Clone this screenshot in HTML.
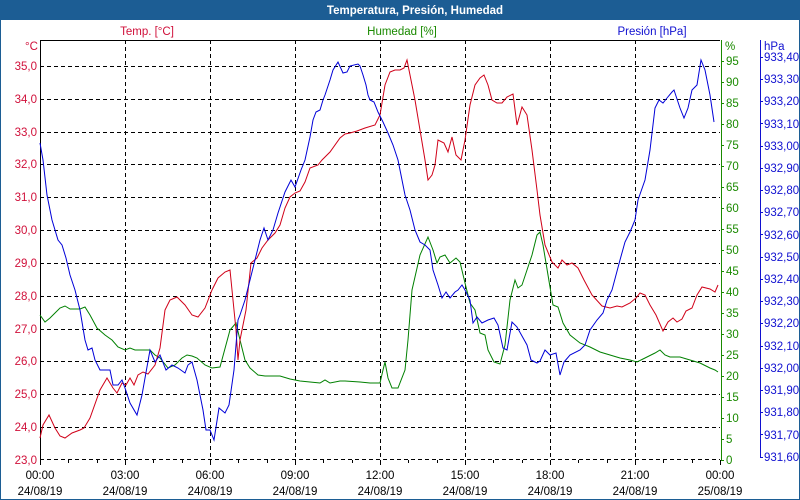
<!DOCTYPE html>
<html><head><meta charset="utf-8"><style>
html,body{margin:0;padding:0;width:800px;height:500px;overflow:hidden;background:#fff}
svg{display:block}
text{font-family:"Liberation Sans",sans-serif;font-size:11.5px}
</style></head><body>
<svg width="800" height="500" viewBox="0 0 800 500" xmlns="http://www.w3.org/2000/svg">
<rect x="0" y="0" width="800" height="500" fill="#fff"/>
<rect x="0" y="0" width="800" height="20" fill="#1c5d94"/>
<rect x="0" y="20" width="1" height="480" fill="#1c5d94"/>
<rect x="799" y="20" width="1" height="480" fill="#1c5d94"/>
<rect x="0" y="499" width="800" height="1" fill="#1c5d94"/>
<text x="415" y="14" fill="#fff" font-weight="bold" font-size="12.5" text-anchor="middle">Temperatura, Presión, Humedad</text>
<text x="147" y="35" fill="#d0103a" text-anchor="middle">Temp. [°C]</text>
<text x="402" y="35" fill="#1a8a00" text-anchor="middle">Humedad [%]</text>
<text x="652" y="35" fill="#1010d0" text-anchor="middle">Presión [hPa]</text>
<text x="25" y="50" fill="#d0103a">°C</text>
<text x="725" y="50" fill="#1a8a00">%</text>
<text x="764" y="50" fill="#1010d0">hPa</text>
<g stroke="#000" stroke-width="1" stroke-dasharray="4,3" fill="none">
<path d="M40 66.5H720M40 99.5H720M40 132.5H720M40 164.5H720M40 197.5H720M40 230.5H720M40 263.5H720M40 296.5H720M40 329.5H720M40 361.5H720M40 394.5H720M40 427.5H720M40 459.5H720"/>
<path d="M125.5 40V460M210.5 40V460M295.5 40V460M380.5 40V460M465.5 40V460M550.5 40V460M635.5 40V460"/>
</g>
<path d="M40.5 40V461M40 40.5H720" stroke="#000" fill="none"/>
<g stroke="#000"><path d="M40.5 460V465M68.5 460V463M97.5 460V463M125.5 460V465M153.5 460V463M182.5 460V463M210.5 460V465M238.5 460V463M267.5 460V463M295.5 460V465M323.5 460V463M352.5 460V463M380.5 460V465M408.5 460V463M437.5 460V463M465.5 460V465M493.5 460V463M522.5 460V463M550.5 460V465M578.5 460V463M607.5 460V463M635.5 460V465M663.5 460V463M692.5 460V463M720.5 460V465"/></g>
<path d="M721.5 40V461" stroke="#1a8a00"/>
<path d="M760.5 40V458" stroke="#1010d0"/>
<g stroke="#1a8a00"><path d="M721 61.5h3M721 82.5h3M721 103.5h3M721 124.5h3M721 145.5h3M721 166.5h3M721 187.5h3M721 208.5h3M721 229.5h3M721 250.5h3M721 271.5h3M721 292.5h3M721 313.5h3M721 334.5h3M721 355.5h3M721 376.5h3M721 397.5h3M721 418.5h3M721 439.5h3M721 460.5h3"/></g>
<g stroke="#1010d0"><path d="M760 57.5h3M760 79.5h3M760 101.5h3M760 123.5h3M760 146.5h3M760 168.5h3M760 190.5h3M760 212.5h3M760 234.5h3M760 257.5h3M760 279.5h3M760 301.5h3M760 323.5h3M760 346.5h3M760 368.5h3M760 390.5h3M760 412.5h3M760 434.5h3M760 457.5h3"/></g>
<g fill="#d0103a" text-anchor="end">
<text x="37" y="70">35,0</text><text x="37" y="103">34,0</text><text x="37" y="136">33,0</text><text x="37" y="168">32,0</text><text x="37" y="201">31,0</text><text x="37" y="234">30,0</text><text x="37" y="267">29,0</text><text x="37" y="300">28,0</text><text x="37" y="333">27,0</text><text x="37" y="365">26,0</text><text x="37" y="398">25,0</text><text x="37" y="431">24,0</text><text x="37" y="464">23,0</text>
</g>
<g fill="#1a8a00">
<text x="726" y="65">95</text><text x="726" y="86">90</text><text x="726" y="107">85</text><text x="726" y="128">80</text><text x="726" y="149">75</text><text x="726" y="170">70</text><text x="726" y="191">65</text><text x="726" y="212">60</text><text x="726" y="233">55</text><text x="726" y="254">50</text><text x="726" y="275">45</text><text x="726" y="296">40</text><text x="726" y="317">35</text><text x="726" y="338">30</text><text x="726" y="359">25</text><text x="726" y="380">20</text><text x="726" y="401">15</text><text x="726" y="422">10</text><text x="726" y="443">5</text><text x="726" y="464">0</text>
</g>
<g fill="#1010d0">
<text x="764" y="61">933,40</text><text x="764" y="83">933,30</text><text x="764" y="105">933,20</text><text x="764" y="128">933,10</text><text x="764" y="150">933,00</text><text x="764" y="172">932,90</text><text x="764" y="194">932,80</text><text x="764" y="216">932,70</text><text x="764" y="239">932,60</text><text x="764" y="261">932,50</text><text x="764" y="283">932,40</text><text x="764" y="305">932,30</text><text x="764" y="327">932,20</text><text x="764" y="350">932,10</text><text x="764" y="372">932,00</text><text x="764" y="394">931,90</text><text x="764" y="416">931,80</text><text x="764" y="439">931,70</text><text x="764" y="461">931,60</text>
</g>
<g fill="#000" text-anchor="middle">
<text x="40" y="479">00:00</text><text x="125" y="479">03:00</text><text x="210" y="479">06:00</text><text x="295" y="479">09:00</text><text x="380" y="479">12:00</text><text x="465" y="479">15:00</text><text x="550" y="479">18:00</text><text x="635" y="479">21:00</text><text x="720" y="479">00:00</text>
<text x="40" y="495">24/08/19</text><text x="125" y="495">24/08/19</text><text x="210" y="495">24/08/19</text><text x="295" y="495">24/08/19</text><text x="380" y="495">24/08/19</text><text x="465" y="495">24/08/19</text><text x="550" y="495">24/08/19</text><text x="635" y="495">24/08/19</text><text x="720" y="495">25/08/19</text>
</g>
<polyline fill="none" stroke="#008000" stroke-width="1" points="40,315 45,322 50,318 55,313 60,308 65,306 70,309 80,309 85,307 90,315 97,328 105,335 112,340 118,347 125,350 130,348 135,350 150,350 155,355 160,358 168,368 175,365 182,358 187,355 192,356 197,358 205,365 212,368 220,367 230,330 236,323 240,340 245,360 250,368 258,375 265,376 280,376 290,379 300,381 310,382 320,383 325,380 330,383 340,381 345,381 360,382 370,383 380,383 383,370 385,362 388,378 392,388 398,388 405,370 408,340 412,290 420,255 428,237 433,250 437,263 440,257 445,255 450,263 456,258 460,262 465,283 470,303 475,310 480,333 485,335 488,350 494,362 500,364 505,345 510,300 515,280 518,288 522,285 527,270 532,255 537,235 540,232 543,245 548,275 553,305 558,307 563,323 570,335 580,343 590,347 600,352 610,355 620,358 630,360 637,362 645,358 655,353 660,350 665,355 670,357 680,357 690,360 700,363 710,368 715,370 718,372"/>
<polyline fill="none" stroke="#d00018" stroke-width="1" points="40,438 43,425 49,415 55,428 60,436 65,438 72,433 80,430 84,428 90,418 100,390 107,378 113,388 117,393 122,383 126,385 130,378 134,385 138,375 143,372 148,374 155,365 160,348 165,310 170,300 177,297 185,305 192,315 198,317 205,308 212,290 218,278 225,272 230,270 233,300 236,330 238,360 240,340 242,330 246,310 251,263 257,258 262,248 268,240 275,233 280,225 285,208 290,197 295,193 300,191 305,182 310,168 318,165 322,160 330,152 340,138 345,134 350,133 357,131 365,128 375,125 380,115 385,85 390,72 395,70 400,70 404,68 407,60 410,75 415,100 420,130 425,160 428,180 432,175 435,165 438,140 444,143 448,152 452,137 456,155 461,160 465,140 470,105 475,85 480,78 484,75 488,85 492,100 497,103 502,103 507,97 513,94 517,125 522,107 527,115 532,150 537,190 540,215 545,245 552,262 558,268 562,260 567,265 572,263 578,268 584,280 592,295 602,306 610,308 617,306 622,307 630,303 636,298 640,293 645,295 650,305 656,315 663,331 668,322 673,318 677,322 682,319 686,311 692,308 697,295 702,287 710,289 715,292 718,285"/>
<polyline fill="none" stroke="#0000d8" stroke-width="1" points="40,143 43,160 47,195 52,220 58,240 62,245 66,258 70,275 75,290 80,310 85,340 88,350 92,348 95,360 100,370 110,370 113,385 118,385 122,380 125,388 130,403 137,415 142,395 150,350 155,362 160,355 166,370 172,365 178,368 185,373 188,365 192,362 197,380 203,410 206,430 210,430 214,440 219,408 225,413 229,405 234,370 238,320 240,315 245,300 250,280 255,260 260,240 264,228 268,240 273,230 278,213 285,192 291,180 295,187 301,170 305,160 310,137 313,120 316,112 320,110 323,100 325,95 330,80 333,70 338,62 343,73 347,72 350,66 358,64 360,66 363,75 366,85 368,95 370,100 374,102 378,112 383,122 388,133 393,145 398,160 402,180 405,195 410,210 415,230 420,242 425,245 430,250 433,270 438,285 442,298 446,292 450,298 455,292 458,290 462,285 465,290 470,300 473,323 477,317 482,323 488,320 494,318 498,325 503,348 507,350 512,322 517,327 522,336 527,345 531,360 537,363 540,361 545,350 550,355 556,353 560,375 564,362 570,355 580,350 585,345 590,330 597,320 603,313 607,300 612,290 620,260 625,242 630,232 635,220 638,200 645,180 650,150 655,108 659,100 663,103 667,98 672,92 674,90 680,108 684,118 688,108 692,90 697,85 701,60 705,70 710,95 714,122"/>
</svg>
</body></html>
